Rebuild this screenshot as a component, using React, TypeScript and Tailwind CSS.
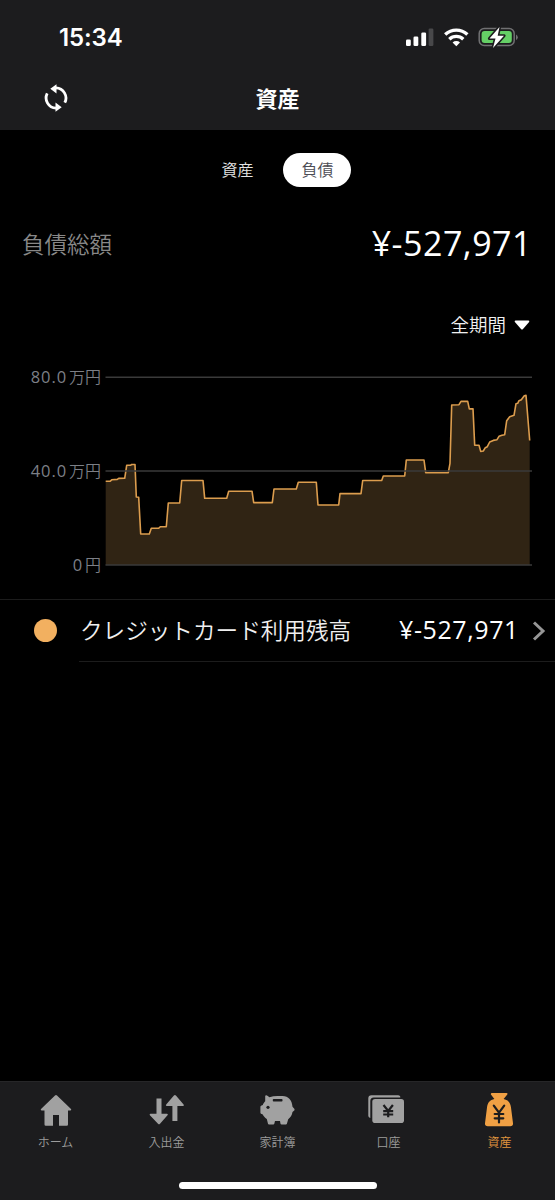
import React, { useState } from 'react';

const LINE_POINTS: [number, number][] = [
    [105.7, 481.3], [110, 481.3], [111.7, 479.8], [117.3, 479.4], [118.7, 478.4], [124.7, 478.3],
    [126.7, 465.3], [130.7, 465.2], [131.7, 464.5], [135, 464.5], [136.3, 497], [138.7, 497.3],
    [140.7, 534], [149.3, 534], [151.3, 528.3], [158.7, 528.3], [160.3, 526.7], [166.3, 526.7],
    [168.3, 503], [179.7, 503], [181.7, 480.5], [203, 480.5], [204.7, 498.3], [226.7, 498.3],
    [228.7, 491.2], [252, 491.2], [253.7, 502.6], [272.3, 502.6], [274, 489], [296.3, 489],
    [298.3, 482.3], [316.3, 482.3], [318, 505], [338.7, 505], [340, 493.6], [361, 493.6],
    [362.7, 480.5], [381.7, 480.5], [383.3, 476], [404.7, 476], [406.3, 460], [424, 460],
    [425.7, 472.7], [448.3, 472.7], [450, 463.3], [451.7, 405], [459, 404.7], [461, 401.4],
    [467.7, 401.4], [469.3, 408.9], [473, 408.9], [474.7, 445.3], [479, 445.3], [480.7, 451.4],
    [483.3, 451], [485.3, 447.7], [487.3, 446.7], [489.7, 442], [493.3, 440.4], [497, 439.7],
    [499, 436.3], [502, 435.3], [504.7, 434.7], [506.7, 420.7], [509.7, 416.7], [514, 415.3],
    [516, 403.7], [517.7, 403.3], [519, 400.7], [521.3, 399.7], [524.3, 395.7], [526, 395.4],
    [529.7, 440.5],
];

const linePath = 'M' + LINE_POINTS.map(([x, y]) => `${x} ${y}`).join('L');

const SyncIcon = () => (
    <svg viewBox="0 0 28 28" className="h-7 w-7">
        <path d="M5.200 9.300A10.200 10.200 0 0 0 14 24.100M22.800 18.700A10.200 10.200 0 0 0 14 3.900" fill="none" stroke="white" strokeWidth="2.800" />
        <path d="M8.300 4.700 14.500.2v9.300zM19.700 23.300 13.500 27.800v-9.300z" fill="white" />
    </svg>
);

const StatusIcons = () => (
    <svg viewBox="0 0 112 24" className="h-6 w-28 overflow-visible" fill="white">
        <rect x="1" y="13.500" width="4.800" height="6.500" rx="1.300" />
        <rect x="8.500" y="10.500" width="4.800" height="9.500" rx="1.300" />
        <rect x="16.300" y="6.500" width="4.800" height="13.500" rx="1.300" />
        <rect x="23.600" y="2.500" width="4.800" height="17.500" rx="1.300" fill="#48484a" />
        <g fill="none" stroke="white" strokeWidth="3.400">
            <path d="M40.200 8.500a16.400 16.400 0 0 1 22.200 0" />
            <path d="M44.300 13.200a10.200 10.200 0 0 1 14 0" />
        </g>
        <path d="M47.600 16.500a5.400 5.400 0 0 1 7.400 0L51.300 20.300z" />
        <rect x="74.200" y="2.500" width="35" height="17" rx="5" fill="none" stroke="#707072" strokeWidth="1.500" />
        <path d="M111 8.500v5.500q1.800-.8 1.800-2.700T111 8.500z" fill="#707072" />
        <rect x="76.600" y="4.900" width="30.200" height="12.200" rx="3" fill="#65cf66" />
        <path d="M94.500 1 84.500 12.500h6l-2.500 9.500L99 9.800h-6.300z" stroke="#1c1c1e" strokeWidth="3.200" paintOrder="stroke" strokeLinejoin="round" />
    </svg>
);

const HomeIcon = () => (
    <svg viewBox="0 0 36 36" className="h-9 w-9" fill="#a1a1a1">
        <path d="M17 2.500q1-1 2 0l14 13.600q.8 1.400-.6 1.400H30V31.500q0 1.300-1.300 1.300H21V22h-6v10.800H7.800q-1.300 0-1.300-1.300v-14H3.600q-1.400 0-.6-1.400z" />
    </svg>
);

const TransferIcon = () => (
    <svg viewBox="0 0 36 36" className="h-9 w-9" fill="#a1a1a1">
        <path d="M7.500 5.500h5v15.200h5.500q1.500.2.500 1.500l-7.500 8.500q-1 1-2 0L.9 22.200q-.8-1.300.5-1.500h6.100z" />
        <path d="M23.400 28h5V13h5.700q1.400-.2.500-1.500L26.900 2.500q-1-1-2 0l-7.700 9q-.9 1.300.5 1.500h5.700z" />
    </svg>
);

const PiggyIcon = () => (
    <svg viewBox="0 0 36 36" className="h-9 w-9">
        <path
            fill="#a1a1a1"
            d="M5.200 2.700Q6 1.800 7 2.500L9.500 4.300Q13 3 17.500 3h5C28.500 3 32 7.300 32.500 13.800l2 2.200v1.200L32.500 19c-.5 3.100-2.100 5.500-4.300 7.300l-1.300 4.400q-.2.700-1 .7h-4.400q-.8 0-1-.7l-.5-2.700h-5l-.7 2.700q-.2.700-1 .7H9q-.8 0-1-.7L6.800 26C4.800 24.600 3.500 23 2.800 21.500L1 20.700Q.4 20.300.4 19.500v-5.500q0-.8.6-1.200l1.800-.8c.6-1.800 1.400-2.700 2.400-3.800z"
        />
        <rect x="12.800" y="6" width="9.700" height="2.600" rx=".8" fill="#1c1c1e" />
        <circle cx="8" cy="14.300" r="1.600" fill="#1c1c1e" />
    </svg>
);

const AccountIcon = () => (
    <svg viewBox="0 0 38 36" className="mr-[5px] h-9 w-[38px]" fill="#a1a1a1">
        <path d="M33.300 4.500V3.800q-.3-1.500-2-1.500H4.500Q1.300 2.300 1.300 5.500v17.600q.2 1.600 2 1.800V8q0-3.500 3.500-3.500z" />
        <rect x="5.300" y="6" width="31.700" height="24" rx="2.800" />
        <path d="m16.500 12 4.700 6 4.700-6M21.200 17.500v6.800M16.200 18.200h10M16.200 21.500h10" fill="none" stroke="#1c1c1e" strokeWidth="2.200" />
    </svg>
);

const AssetIcon = () => (
    <svg viewBox="0 0 36 36" className="mr-px h-9 w-9">
        <path
            fill="#f0a044"
            d="M11 .1h14.500q1.500 0 .8 1.300L22.600 6c4.400.9 6.800 3.500 7.400 8.500l2 15.800q.3 3-2.700 3H6.700q-3 0-2.700-3l2-15.800c.6-5 3-7.600 7.400-8.500L9.900 1.400Q9.500.1 11 .1z"
        />
        <path d="m12.800 12.700 5.200 7 5.200-7M18 19v10.400M13.700 21h8.600M13.700 25.300h8.600" fill="none" stroke="#1c1c1e" strokeWidth="2.200" strokeLinecap="round" />
    </svg>
);

const NAV_ITEMS = [
    { label: 'ホーム', Icon: HomeIcon },
    { label: '入出金', Icon: TransferIcon },
    { label: '家計簿', Icon: PiggyIcon },
    { label: '口座', Icon: AccountIcon },
    { label: '資産', Icon: AssetIcon, active: true },
];

const DebtChart: React.FC = () => (
    <div className="flex h-[200px]">
        <div className="flex w-[105px] flex-col pr-[4px] text-right text-[16.500px] tracking-[0.9px] text-[#7c7f86]">
            <span className="h-[94px] shrink-0 leading-[14px]">80.0<span className="ml-0.5 text-[16px] font-[350] tracking-normal">万円</span></span>
            <span className="h-[94px] shrink-0 leading-[14px]">40.0<span className="ml-0.5 text-[16px] font-[350] tracking-normal">万円</span></span>
            <span className="leading-[14px]">0<span className="ml-0.5 text-[16px] font-[350] tracking-normal">円</span></span>
        </div>
        <svg viewBox="105 370 428 200" className="h-[200px] w-[428px]">
            <path d={`${linePath}V565H105.7Z`} fill="#302414" />
            <path d={linePath} fill="none" stroke="#dc9d4e" strokeWidth="1.6" strokeLinejoin="round" />
            <path d="M105.500 377.200H532M105.500 470.900H532M105.500 564.900H532" stroke="#3a3a3a" strokeWidth="1.500" />
        </svg>
    </div>
);

const App: React.FC = () => {
    const [tab, setTab] = useState<'資産' | '負債'>('負債');

    return (
        <div className="flex h-[1200px] w-[555px] flex-col overflow-hidden bg-black font-['Open_Sans','Noto_Sans_CJK_JP',sans-serif] text-white">
            <header className="h-[130px] bg-[#1c1c1e]">
                <div className="flex h-[74px] items-center justify-between pt-px pr-[38px] pl-[59px]">
                    <span className="font-['Inter',sans-serif] text-[24px] font-semibold tracking-[-0.1px]">15:34</span>
                    <StatusIcons />
                </div>
                <div className="grid h-12 grid-cols-3 items-center px-[42px]">
                    <button className="w-7"><SyncIcon /></button>
                    <h1 className="text-center text-[22px] font-bold">資産</h1>
                </div>
            </header>

            <div className="flex h-[79px] items-center justify-center gap-3 pr-px">
                {(['資産', '負債'] as const).map(name => (
                    <button
                        key={name}
                        onClick={() => setTab(name)}
                        className={`h-[34px] w-[68px] rounded-full pl-px text-[16px] leading-[34px] font-[350] ${tab === name ? 'bg-white text-[#4c4c54]' : 'text-[#e4e4e4]'}`}
                    >
                        {name}
                    </button>
                ))}
            </div>

            <div className="flex h-[67px] items-center justify-between pr-[24px] pl-[22px]">
                <span className="pt-[5px] text-[22.500px] font-[350] text-[#888]">負債総額</span>
                <span className="-mr-px text-[34px] leading-none tracking-[0.5px]">¥-527,971</span>
            </div>

            <div className="flex h-[94px] items-center justify-end gap-2 pt-1 pr-[25px]">
                <span className="text-[18.500px] font-[350] text-[#f0f0f0]">全期間</span>
                <svg viewBox="0 0 16 10" className="h-2.5 w-4" fill="white">
                    <path d="M1.500.5h13q1.500.3.600 1.500L9 9q-1 1-2 0L.9 2Q0 .8 1.500.5z" />
                </svg>
            </div>

            <DebtChart />

            <div className="mt-[29px] flex h-[63px] border-t border-[#1c1c1c]">
                <div className="flex w-[79px] items-center pb-0.5 pl-[34px]">
                    <span className="h-[23px] w-[23px] rounded-full bg-[#f2b060]" />
                </div>
                <div className="flex flex-1 items-center border-b border-[#1c1c1c] pr-[9px] pl-px">
                    <span className="text-[22.600px] font-[350] text-[#f0f0f0]">クレジットカード利用残高</span>
                    <span className="ml-auto pb-0.5 text-[25px] tracking-[0.6px]">¥-527,971</span>
                    <svg viewBox="0 0 14 20" className="ml-[13px] h-5 w-3.5" fill="none" stroke="#969696" strokeWidth="3">
                        <path d="m2 1.500 9 8.500-9 8.500" />
                    </svg>
                </div>
            </div>

            <nav className="mt-auto flex h-[119px] flex-col border-t border-[#262628] bg-[#1c1c1e]">
                <div className="grid flex-1 grid-cols-5 pt-[11px]">
                    {NAV_ITEMS.map(({ label, Icon, active }) => (
                        <button key={label} className="flex flex-col items-center justify-start">
                            <Icon />
                            <span className={`mt-1.5 text-[12px] leading-4 font-[350] ${active ? 'text-[#e0963f]' : 'text-[#9c9c9c]'}`}>{label}</span>
                        </button>
                    ))}
                </div>
                <div className="mx-auto mb-[11px] h-[7px] w-[198px] rounded-full bg-white" />
            </nav>
        </div>
    );
};

export default App;
